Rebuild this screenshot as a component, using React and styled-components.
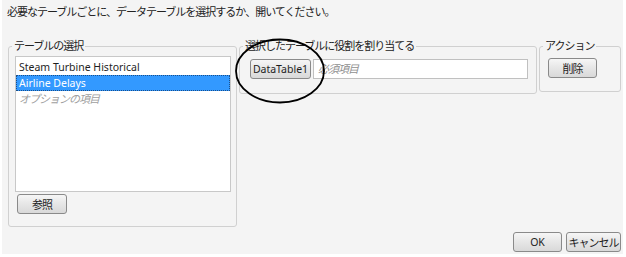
import React from 'react';
import styled, { createGlobalStyle } from "styled-components";

const Global = createGlobalStyle`
    body {
        margin: 0;
        background: #ffffff;
        font-family: "Noto Sans", "Noto Sans CJK JP", sans-serif;
        font-size: 11px;
        color: #1e1e1e;
    }
`;

export default function App() {
    return (
        <>
            <Global />
            <Window>
                <Title>必要なテーブルごとに、データテーブルを選択するか、開いてください。</Title>
                <Groups>
                    <Group $w={229} $h={188}>
                        <Legend>テーブルの選択</Legend>
                        <Body $pad="3px 0 0 6px">
                            <List>
                                <Item>Steam Turbine Historical</Item>
                                <Item $selected>Airline Delays</Item>
                                <Item $hint>オプションの項目</Item>
                            </List>
                            <Button $w={50} $jp $gap>参照</Button>
                        </Body>
                    </Group>
                    <Group $w={298} $h={55}>
                        <Legend>選択したテーブルに役割を割り当てる</Legend>
                        <Body $pad="6px 0 0 10px">
                            <Row>
                                <Button $w={61}>DataTable1</Button>
                                <Field>必須項目</Field>
                            </Row>
                        </Body>
                    </Group>
                    <Group $w={82} $h={53}>
                        <Legend>アクション</Legend>
                        <Body $pad="5px 0 0 8px">
                            <Button $w={49} $jp>削除</Button>
                        </Body>
                    </Group>
                </Groups>
                <Footer>
                    <Button $w={49}>OK</Button>
                    <Button $w={55} $jp>キャンセル</Button>
                </Footer>
                <Mark width="94" height="68" viewBox="0 0 94 68">
                    <ellipse cx="47" cy="34" rx="44" ry="31.5" fill="none" stroke="#000" strokeWidth="1.8" />
                </Mark>
            </Window>
        </>
    )
}

const Window = styled.div `
    position: relative;
    width: 621px;
    height: 254px;
    margin-left: 2px;
    background: #f4f4f4;
    box-sizing: border-box;
    padding: 5px 0 0 6px;
    display: flex;
    flex-direction: column;
`;
const Title = styled.div `
    height: 14px;
    line-height: 14px;
    margin-left: -1px;
    letter-spacing: -1px;
    color: #222;
`;
const Groups = styled.div `
    display: flex;
    align-items: flex-start;
    gap: 2px;
    margin-top: 20px;
`;
const Group = styled.fieldset `
    margin: 0;
    box-sizing: border-box;
    width: ${p => p.$w}px;
    height: ${p => p.$h}px;
    border: 1px solid #d0d0d0;
    border-radius: 3px;
    padding: 0;
    min-width: 0;
`;
const Legend = styled.legend `
    padding: 0 2px;
    margin-left: 3px;
    line-height: 14px;
    height: 14px;
    letter-spacing: -1px;
    color: #222;
`;
const Body = styled.div `
    padding: ${p => p.$pad};
`;
const List = styled.div `
    width: 216px;
    height: 136px;
    box-sizing: border-box;
    background: #fff;
    border: 1px solid #c8c8c8;
    padding: 2px 0 0 0;
`;
const Item = styled.div `
    height: 16px;
    line-height: 16px;
    padding-left: 3px;
    box-sizing: border-box;
    font-size: ${p => p.$hint ? "11px" : "10.5px"};
    background: ${p => p.$selected ? "#3399ff" : "transparent"};
    color: ${p => p.$selected ? "#fff" : p.$hint ? "#a0a0a0" : "#1e1e1e"};
    font-style: ${p => p.$hint ? "italic" : "normal"};
    letter-spacing: ${p => p.$hint ? "-1px" : "0"};
    outline: ${p => p.$selected ? "1px dotted #1a4f8a" : "none"};
    outline-offset: -1px;
`;
const Button = styled.div `
    width: ${p => p.$w}px;
    height: 20px;
    margin: ${p => p.$gap ? "2px 0 0 2px" : "0"};
    box-sizing: border-box;
    border: 1px solid #8a8a8a;
    border-radius: 3px;
    background: linear-gradient(#f6f6f6, #e6e6e6 50%, #d9d9d9);
    display: flex;
    align-items: center;
    justify-content: center;
    font-size: ${p => p.$jp ? "11px" : "10.5px"};
    letter-spacing: ${p => p.$jp ? "-1px" : "0"};
    color: #1e1e1e;
    flex-shrink: 0;
`;
const Row = styled.div `
    display: flex;
    gap: 2px;
    align-items: center;
`;
const Field = styled.div `
    width: 215px;
    height: 20px;
    box-sizing: border-box;
    background: #fff;
    border: 1px solid #c0c0c0;
    padding-left: 4px;
    line-height: 18px;
    font-style: italic;
    letter-spacing: -1px;
    color: #909090;
`;
const Footer = styled.div `
    display: flex;
    justify-content: flex-end;
    gap: 4px;
    margin-top: 5px;
    padding-right: 2px;
`;
const Mark = styled.svg `
    position: absolute;
    left: 231px;
    top: 37px;
    pointer-events: none;
`;
